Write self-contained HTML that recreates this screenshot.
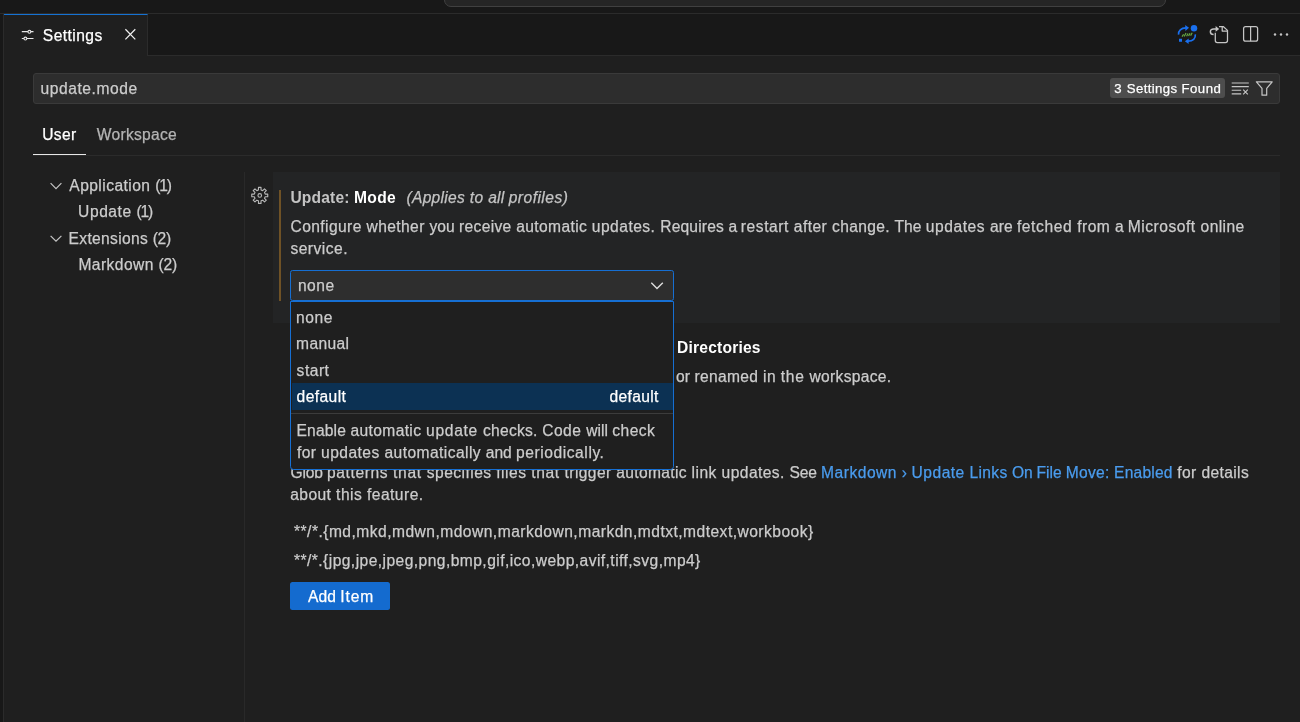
<!DOCTYPE html>
<html lang="en">
<head>
<meta charset="utf-8">
<title>Settings</title>
<style>
*{box-sizing:border-box;margin:0;padding:0}
html,body{width:1300px;height:722px;overflow:hidden;background:#1f1f1f}
body{position:relative;font-family:"Liberation Sans",sans-serif;color:#cccccc;font-size:15.6px}
#app{position:absolute;left:0;top:0;width:1300px;height:722px;will-change:transform}
.a{position:absolute}
.t{position:absolute;white-space:nowrap;line-height:20px;font-size:15.6px;color:#cccccc;-webkit-text-stroke:0.25px currentColor}
#titlebar{left:0;top:0;width:1300px;height:14px;background:#181818;border-bottom:1px solid #2b2b2b}
#cmd{left:444px;top:-20px;width:722px;height:27px;background:#252525;border:1px solid #404040;border-radius:7px}
#leftstrip{left:0;top:14px;width:4px;height:708px;background:#181818;border-right:1px solid #2b2b2b}
#tabbar{left:4px;top:14px;width:1296px;height:42px;background:#181818;border-bottom:1px solid #2b2b2b}
#tab{left:4px;top:14px;width:144px;height:42px;background:#1f1f1f;border-top:1px solid #1572d3;border-right:1px solid #2b2b2b}
#search{left:33px;top:73px;width:1247px;height:31px;background:#2d2d2d;border:1px solid #3a3a3a;border-radius:3px}
#badge{left:1110px;top:78px;width:115px;height:20px;background:#4d4d4d;border-radius:3px}
#hdrline{left:33px;top:155px;width:1247px;height:1px;background:#2b2b2b}
#userline{left:33px;top:154px;width:53px;height:1.3px;background:#e7e7e7}
#tocline{left:244px;top:172px;width:1px;height:550px;background:#292929}
#row{left:273px;top:172px;width:1007px;height:150.5px;background:#232425}
#modbar{left:279px;top:190px;width:2.2px;height:110.6px;background:#6f5226}
#select{left:290px;top:270px;width:384px;height:31px;background:#2e2e2e;border:1.2px solid #166fd3;border-radius:2.5px}
#dd{left:290px;top:301px;width:384px;height:169px;background:#1f1f1f;border:1.2px solid #166fd3;border-radius:0 0 3.5px 3.5px}
#ddsel{left:291.5px;top:383.2px;width:381px;height:26.6px;background:#0c3153}
#ddsep{left:291.2px;top:413px;width:381.6px;height:1px;background:#3c3c3c}
#btn{left:290px;top:582px;width:100px;height:27.8px;background:#146bcf;border-radius:2.5px}
svg{position:absolute;left:0;top:0;overflow:visible}
</style>
</head>
<body>
<div id="app">
<div class="a" id="titlebar"></div>
<div class="a" id="cmd"></div>
<div class="a" id="leftstrip"></div>
<div class="a" id="tabbar"></div>
<div class="a" id="tab"></div>
<div class="a" id="search"></div>
<div class="a" id="badge"></div>
<div class="a" id="hdrline"></div>
<div class="a" id="userline"></div>
<div class="a" id="tocline"></div>
<div class="a" id="row"></div>
<div class="a" id="modbar"></div>
<div class="a" id="select"></div>
<div class="a" id="btn"></div>
<svg width="1300" height="722" viewBox="0 0 1300 722" fill="none">
<!-- settings tab icon -->
<g stroke="#e6e6e6" stroke-width="1.1">
<path d="M21.8,31.65H33.5M21.8,38.5H33.5"/>
<circle cx="29.4" cy="31.8" r="1.45" fill="#1f1f1f"/>
<circle cx="25.4" cy="38.6" r="1.45" fill="#1f1f1f"/>
</g>
<!-- close -->
<path d="M125.4,29.3L135.3,39.4M135.3,29.3L125.4,39.4" stroke="#f0f0f0" stroke-width="1.25"/>
<!-- sync icon -->
<g>
<circle cx="1194" cy="28.25" r="3.25" fill="#1a70ee"/>
<rect x="1179" y="38.75" width="3" height="3" fill="#1a70ee"/>
<path d="M1178.6,34.6C1178.2,30.6 1181,28 1186,27.9" stroke="#1a70ee" stroke-width="1.7"/>
<path d="M1185.2,24.9L1189,27.8L1185.4,30.9Z" fill="#1a70ee"/>
<path d="M1195.3,34.4C1195.8,38.6 1193,41.1 1188,41.2" stroke="#1a70ee" stroke-width="1.7"/>
<path d="M1188.7,38.4L1184.9,41.3L1188.6,44Z" fill="#1a70ee"/>
<path d="M1182,36.6L1183.6,34.4M1184.2,36.4L1186,33M1186.6,36.2L1188,33.6M1188.6,36L1190,33.2M1190.6,35.6L1192.2,32.8" stroke="#68ad45" stroke-width="1.15"/>
</g>
<!-- open json icon -->
<g stroke="#c5c5c5" stroke-width="1.25" stroke-linejoin="round">
<path d="M1215.3,32.8V40.5a2,2 0 0 0 2,2H1225.5a2,2 0 0 0 2,-2V30.4L1223.2,26.5H1219"/>
<path d="M1222.2,26.6V31H1227.4"/>
<path d="M1213.6,34.4C1209.3,34.4 1209.3,28.9 1213.6,28.9H1216.6" stroke-width="1.5"/>
<path d="M1215.6,25.9L1219.2,28.9L1215.6,31.8Z" fill="#c5c5c5" stroke="none"/>
</g>
<!-- split editor -->
<g stroke="#c5c5c5" stroke-width="1.25">
<rect x="1243.6" y="26.6" width="14" height="14.6" rx="2"/>
<path d="M1250.6,26.6V41.2"/>
</g>
<!-- ellipsis -->
<g fill="#c5c5c5"><circle cx="1275" cy="34.5" r="1.2"/><circle cx="1281" cy="34.5" r="1.2"/><circle cx="1287" cy="34.5" r="1.2"/></g>
<!-- clear search -->
<g stroke="#c5c5c5" stroke-width="1.15">
<path d="M1231.7,83H1248.8M1231.7,86.6H1248.8M1231.7,90.2H1241.2M1231.7,93.8H1241.2"/>
<path d="M1243.2,89.6L1247.8,94.4M1247.8,89.6L1243.2,94.4"/>
</g>
<!-- filter -->
<path d="M1256.4,81.8H1272.2L1266.7,88.4V95.2H1262V88.4Z" stroke="#c5c5c5" stroke-width="1.2" stroke-linejoin="round"/>
<!-- gear -->
<path d="M258.44,189.95 L258.48,187.40 L261.02,187.40 L261.06,189.95 L262.68,190.63 L264.51,188.85 L266.30,190.64 L264.52,192.47 L265.20,194.09 L267.75,194.13 L267.75,196.67 L265.20,196.71 L264.52,198.33 L266.30,200.16 L264.51,201.95 L262.68,200.17 L261.06,200.85 L261.02,203.40 L258.48,203.40 L258.44,200.85 L256.82,200.17 L254.99,201.95 L253.20,200.16 L254.98,198.33 L254.30,196.71 L251.75,196.67 L251.75,194.13 L254.30,194.09 L254.98,192.47 L253.20,190.64 L254.99,188.85 L256.82,190.63Z" stroke="#b8b8b8" stroke-width="1.1" stroke-linejoin="round"/>
<circle cx="259.75" cy="195.4" r="1.8" stroke="#b8b8b8" stroke-width="1.1"/>
<!-- toc chevrons -->
<g stroke="#c5c5c5" stroke-width="1.2">
<path d="M50.6,183.2L56,188.6L61.4,183.2"/>
<path d="M50.6,235.8L56,241.2L61.4,235.8"/>
</g>
<!-- select chevron -->
<path d="M651.3,282.8L657,288.5L662.8,282.8" stroke="#dddddd" stroke-width="1.4"/>
</svg>

<div class="t" style="left:42.80px;top:26.00px;letter-spacing:0.436px;color:#ffffff">Settings</div>
<div class="t" style="left:40.50px;top:78.80px;letter-spacing:0.554px">update.mode</div>
<div class="t" style="left:1114.20px;top:79.30px;font-size:13.2px;color:#ffffff"><span style="letter-spacing:0.801px">3 </span><span style="letter-spacing:0.365px">Settings </span><span style="letter-spacing:0.510px">Found</span></div>
<div class="t" style="left:42.20px;top:125.10px;letter-spacing:0.356px;color:#ffffff">User</div>
<div class="t" style="left:96.80px;top:125.10px;letter-spacing:0.270px;color:#b4b4b4">Workspace</div>
<div class="t" style="left:69.30px;top:176.20px"><span style="letter-spacing:0.440px">Application </span><span style="letter-spacing:-1.133px">(1)</span></div>
<div class="t" style="left:78.10px;top:201.60px"><span style="letter-spacing:0.555px">Update </span><span style="letter-spacing:-1.233px">(1)</span></div>
<div class="t" style="left:68.60px;top:229.00px"><span style="letter-spacing:0.317px">Extensions </span><span style="letter-spacing:-0.283px">(2)</span></div>
<div class="t" style="left:78.40px;top:255.40px"><span style="letter-spacing:0.437px">Markdown </span><span style="letter-spacing:-0.283px">(2)</span></div>
<div class="t" style="left:290.40px;top:188.10px;font-weight:bold;-webkit-text-stroke:0;color:#c4c4c4"><span style="letter-spacing:0.166px">Update: </span><span style="letter-spacing:0.287px;color:#ffffff">Mode</span></div>
<div class="t" style="left:406.50px;top:188.10px;font-style:italic;color:#c4c4c4"><span style="letter-spacing:0.281px">(Applies </span><span style="letter-spacing:0.388px">to </span><span style="letter-spacing:0.142px">all </span><span style="letter-spacing:0.454px">profiles)</span></div>
<div class="t" style="left:290.50px;top:217.40px"><span style="letter-spacing:0.405px">Configure </span><span style="letter-spacing:0.399px">whether </span><span style="letter-spacing:0.006px">you </span><span style="letter-spacing:0.325px">receive </span><span style="letter-spacing:0.366px">automatic </span><span style="letter-spacing:0.471px">updates. </span><span style="letter-spacing:0.162px">Requires </span><span style="letter-spacing:-0.302px">a </span><span style="letter-spacing:0.553px">restart </span><span style="letter-spacing:0.452px">after </span><span style="letter-spacing:0.334px">change. </span><span style="letter-spacing:0.012px">The </span><span style="letter-spacing:0.553px">updates </span><span style="letter-spacing:-0.018px">are </span><span style="letter-spacing:0.614px">fetched </span><span style="letter-spacing:0.436px">from </span><span style="letter-spacing:-0.152px">a </span><span style="letter-spacing:0.532px">Microsoft </span><span style="letter-spacing:0.391px">online</span></div>
<div class="t" style="left:290.40px;top:239.00px;letter-spacing:0.487px">service.</div>
<div class="t" style="left:297.90px;top:276.00px;letter-spacing:0.527px">none</div>
<div class="t" style="left:677.00px;top:338.00px;letter-spacing:0.200px;font-weight:bold;-webkit-text-stroke:0;color:#ffffff">Directories</div>
<div class="t" style="left:676.06px;top:367.00px"><span style="letter-spacing:0.114px">or </span><span style="letter-spacing:0.315px">renamed </span><span style="letter-spacing:0.444px">in </span><span style="letter-spacing:0.673px">the </span><span style="letter-spacing:0.307px">workspace.</span></div>
<div class="t" style="left:290.50px;top:463.00px"><span style="letter-spacing:-0.154px">Glob </span><span style="letter-spacing:0.591px">patterns </span><span style="letter-spacing:0.682px">that </span><span style="letter-spacing:0.450px">specifies </span><span style="letter-spacing:0.489px">files </span><span style="letter-spacing:0.582px">that </span><span style="letter-spacing:0.402px">trigger </span><span style="letter-spacing:0.331px">automatic </span><span style="letter-spacing:0.454px">link </span><span style="letter-spacing:0.427px">updates. </span><span style="letter-spacing:-0.145px">See </span><span style="letter-spacing:0.499px;color:#4a9cee">Markdown </span><span style="letter-spacing:0.112px;color:#4a9cee">› </span><span style="letter-spacing:0.483px;color:#4a9cee">Update </span><span style="letter-spacing:0.294px;color:#4a9cee">Links </span><span style="letter-spacing:-0.211px;color:#4a9cee">On </span><span style="letter-spacing:-0.042px;color:#4a9cee">File </span><span style="letter-spacing:0.242px;color:#4a9cee">Move: </span><span style="letter-spacing:0.180px;color:#4a9cee">Enabled </span><span style="letter-spacing:0.430px">for </span><span style="letter-spacing:0.379px">details</span></div>
<div class="t" style="left:290.20px;top:484.50px"><span style="letter-spacing:0.424px">about </span><span style="letter-spacing:0.460px">this </span><span style="letter-spacing:0.465px">feature.</span></div>
<div class="t" style="left:294.00px;top:522.20px;letter-spacing:0.470px">**/*.{md,mkd,mdwn,mdown,markdown,markdn,mdtxt,mdtext,workbook}</div>
<div class="t" style="left:294.00px;top:551.20px;letter-spacing:0.442px">**/*.{jpg,jpe,jpeg,png,bmp,gif,ico,webp,avif,tiff,svg,mp4}</div>
<div class="t" style="left:308.10px;top:587.00px;color:#ffffff"><span style="letter-spacing:0.005px">Add </span><span style="letter-spacing:0.921px">Item</span></div>
<div class="a" id="dd"></div>
<div class="a" id="ddsel"></div>
<div class="a" id="ddsep"></div>
<div class="t" style="left:296.10px;top:308.00px;letter-spacing:0.561px">none</div>
<div class="t" style="left:296.10px;top:334.40px;letter-spacing:0.324px">manual</div>
<div class="t" style="left:296.60px;top:360.80px;letter-spacing:0.501px">start</div>
<div class="t" style="left:296.60px;top:387.20px;letter-spacing:0.402px;color:#ffffff">default</div>
<div class="t" style="left:609.50px;top:387.20px;letter-spacing:0.336px;color:#ffffff">default</div>
<div class="t" style="left:296.50px;top:420.80px"><span style="letter-spacing:0.159px">Enable </span><span style="letter-spacing:0.356px">automatic </span><span style="letter-spacing:0.710px">update </span><span style="letter-spacing:0.250px">checks. </span><span style="letter-spacing:0.478px">Code </span><span style="letter-spacing:0.023px">will </span><span style="letter-spacing:0.440px">check</span></div>
<div class="t" style="left:297.00px;top:442.60px"><span style="letter-spacing:0.367px">for </span><span style="letter-spacing:0.459px">updates </span><span style="letter-spacing:0.422px">automatically </span><span style="letter-spacing:-0.025px">and </span><span style="letter-spacing:0.563px">periodically.</span></div>
</div>
</body>
</html>
